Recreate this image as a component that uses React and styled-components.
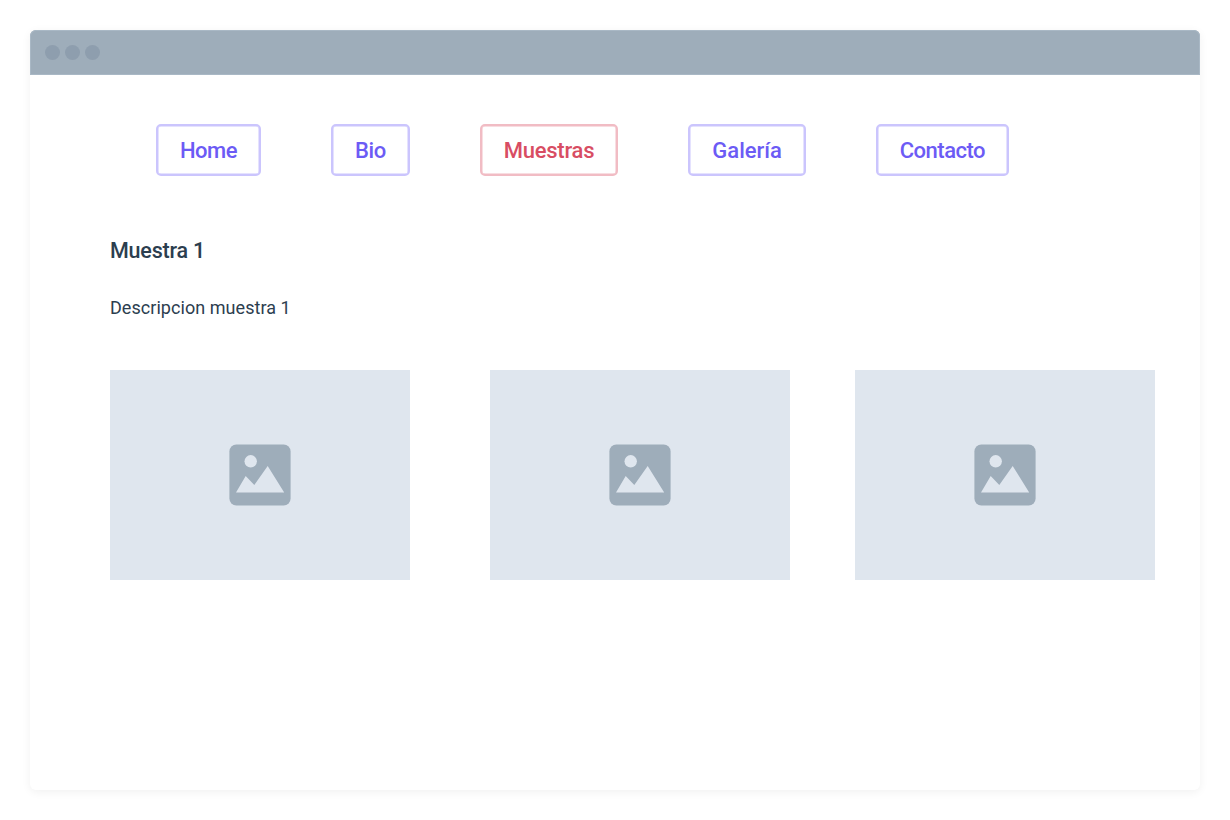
import React from "react";
import styled, { createGlobalStyle } from "styled-components";

const GlobalStyle = createGlobalStyle`
  * { box-sizing: border-box; }
  body { margin: 0; background: #fff; font-family: Roboto, "Liberation Sans", sans-serif; }
`;

const Page = styled.div`
  height: 820px;
  padding: 30px;
`;

const Window = styled.div`
  height: 760px;
  background: #fff;
  border-radius: 6px;
  box-shadow: 0 2px 10px rgba(0, 0, 0, 0.06);
`;

const TitleBar = styled.header`
  height: 45px;
  display: flex;
  align-items: center;
  gap: 5px;
  padding-left: 15px;
  background: #9eadba;
  border-radius: 6px 6px 0 0;
  box-shadow: inset 0 0 0 1px #a9b8c5;
`;

const Dot = styled.span`
  width: 15px;
  height: 15px;
  border-radius: 50%;
  background: #8e9eae;
`;

const Nav = styled.nav`
  display: flex;
  gap: 70.3px;
  padding: 49px 0 0 126px;
`;

const NavButton = styled.button`
  width: ${(p) => p.$width}px;
  height: 52px;
  padding: 1px 0 0;
  background: #fff;
  border: 2px solid ${(p) => (p.$active ? "#f1bcc4" : "#cbc5fd")};
  box-shadow: inset 0 0 0 0.5px ${(p) => (p.$active ? "#f1bcc4" : "#cbc5fd")};
  border-radius: 5px;
  color: ${(p) => (p.$active ? "#d84d63" : "#6c5bf5")};
  font: 500 22px/1 Roboto, "Liberation Sans", sans-serif;
  letter-spacing: ${(p) => p.$spacing}px;
  white-space: nowrap;
`;

const Content = styled.main`
  padding: 61px 45px 0 80px;
  color: #2c3e4f;
`;

const Title = styled.h1`
  margin: 0;
  font-size: 21.5px;
  line-height: 28px;
  font-weight: 500;
  letter-spacing: -0.2px;
`;

const Description = styled.p`
  margin: 32px 0 0;
  font-size: 18px;
  line-height: 22px;
  letter-spacing: 0.05px;
`;

const Gallery = styled.div`
  display: grid;
  grid-template-columns: 380px 365px 300px;
  margin-top: 51px;
`;

const Placeholder = styled.div`
  width: 300px;
  height: 210px;
  display: flex;
  align-items: center;
  justify-content: center;
  background: #dfe6ee;
`;

const Picture = () => (
  <svg width="62" height="62" viewBox="0 0 62 62" aria-hidden="true">
    <rect x="0.4" y="0.4" width="61.2" height="61.2" rx="7" fill="#9eadba" />
    <circle cx="21.7" cy="17.3" r="6.2" fill="#dfe6ee" />
    <path d="M7 48.5 16.7 32 25.3 41 38.7 22 55.2 48.5Z" fill="#dfe6ee" />
  </svg>
);

const items = [
  { label: "Home", width: 105, spacing: -0.5 },
  { label: "Bio", width: 78.3, spacing: -0.4 },
  { label: "Muestras", width: 138.2, spacing: -0.25 },
  { label: "Galería", width: 117.5, spacing: 0 },
  { label: "Contacto", width: 132.5, spacing: -0.5 },
];

export default function App() {
  return (
    <Page>
      <GlobalStyle />
      <Window>
        <TitleBar>
          <Dot />
          <Dot />
          <Dot />
        </TitleBar>
        <Nav>
          {items.map((item) => (
            <NavButton
              key={item.label}
              $width={item.width}
              $spacing={item.spacing}
              $active={item.label === "Muestras"}
            >
              {item.label}
            </NavButton>
          ))}
        </Nav>
        <Content>
          <Title>Muestra 1</Title>
          <Description>Descripcion muestra 1</Description>
          <Gallery>
            <Placeholder><Picture /></Placeholder>
            <Placeholder><Picture /></Placeholder>
            <Placeholder><Picture /></Placeholder>
          </Gallery>
        </Content>
      </Window>
    </Page>
  );
}
